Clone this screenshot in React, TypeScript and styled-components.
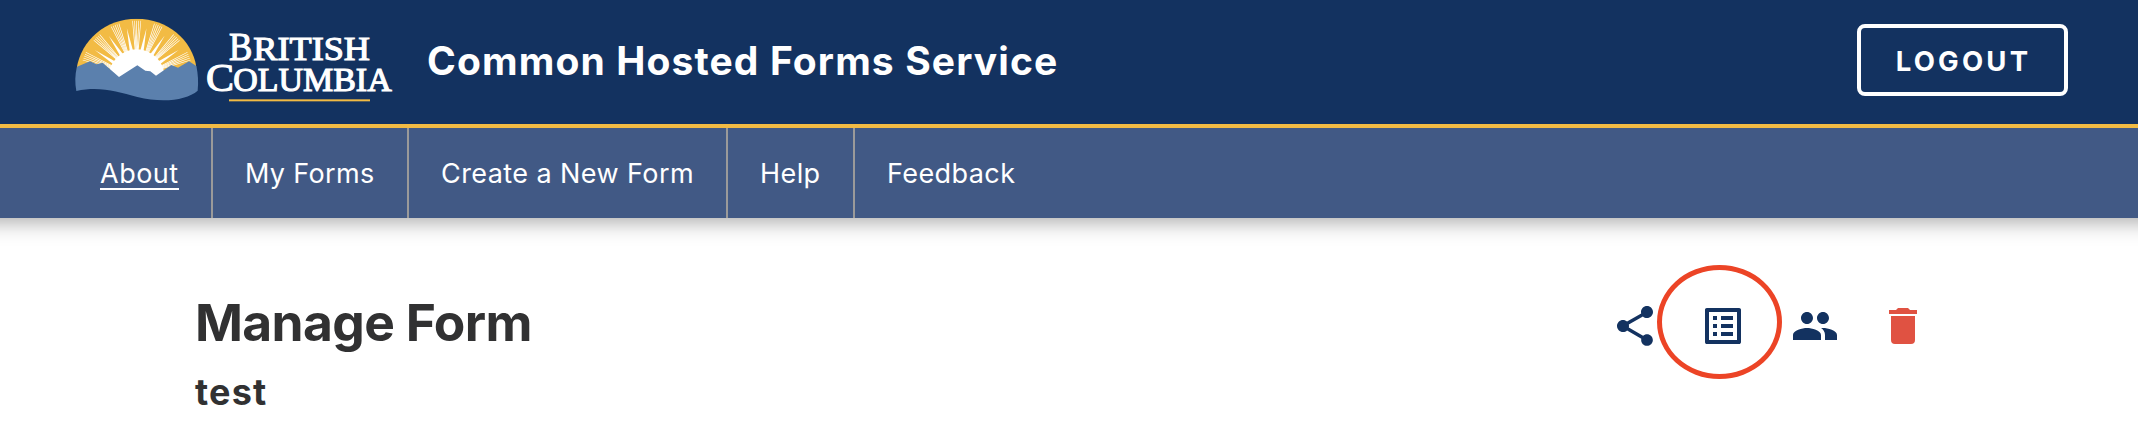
import React from "react";
import styled, { createGlobalStyle } from "styled-components";

const GlobalStyle = createGlobalStyle`
  * { box-sizing: border-box; }
  body { margin: 0; background: #fff; overflow-x: hidden; font-family: Inter, "Liberation Sans", sans-serif; }
`;

const Header = styled.header`
  position: relative;
  z-index: 1;
  height: 128px;
  padding: 0 70px 0 60px;
  display: flex;
  align-items: flex-start;
  background: #133260;
  border-bottom: 4px solid #f2bb44;
`;

const Logo = styled.svg`
  flex: none;
  width: 350px;
  height: 124px;
`;

const Title = styled.h1`
  margin: 38px auto 0 17px;
  color: #fff;
  font-size: 39px;
  line-height: 46px;
  font-weight: 650;
  letter-spacing: 1.12px;
`;

const LogoutButton = styled.button`
  margin-top: 24px;
  width: 211px;
  height: 72px;
  padding: 2px 0 0 2px;
  border: 4px solid #fff;
  border-radius: 8px;
  background: transparent;
  color: #fff;
  font: 650 27.5px/62px Inter, sans-serif;
  letter-spacing: 3.2px;
`;

const Nav = styled.nav`
  height: 90px;
  margin: 0 -24px;
  padding-left: 92px;
  display: flex;
  background: #415985;
  box-shadow: 0 4px 20px rgba(0, 0, 0, 0.34);
`;

const NavItem = styled.div<{ $width: number; $last?: boolean }>`
  width: ${(p) => p.$width}px;
  padding: 30px 0 0 32px;
  border-right: ${(p) => (p.$last ? "0" : "2px solid #9a9a9a")};
`;

const NavLink = styled.a<{ $active?: boolean; $spacing?: number }>`
  display: inline-block;
  height: 32px;
  line-height: 32px;
  font-size: 27px;
  white-space: nowrap;
  color: #fff;
  letter-spacing: ${(p) => p.$spacing ?? 0.42}px;
  border-bottom: ${(p) => (p.$active ? "2px solid #fff" : "0")};
`;

const Main = styled.main`
  display: flex;
  justify-content: space-between;
  padding: 74px 211px 0 195px;
`;

const Heading = styled.h2`
  margin: 0;
  color: #313132;
  font-size: 51.5px;
  line-height: 60px;
  font-weight: 700;
  letter-spacing: -0.65px;
`;

const FormName = styled.h3`
  margin: 19px 0 0;
  color: #313132;
  font-size: 36px;
  line-height: 42px;
  font-weight: 700;
  letter-spacing: 1.2px;
`;

const Actions = styled.div`
  display: flex;
  margin-top: 10px;
  gap: 40px;
`;

const Action = styled.div<{ $color?: string; $shift?: number }>`
  position: relative;
  width: 48px;
  height: 48px;
  margin-left: ${(p) => p.$shift ?? 0}px;
  color: ${(p) => p.$color ?? "#133260"};
  svg { display: block; fill: currentColor; }
`;

const Ring = styled.div`
  position: absolute;
  left: -42px;
  top: -37px;
  width: 125px;
  height: 114px;
  border: 5px solid #ec4426;
  border-radius: 50%;
`;

const Icon = ({ d }: { d: string }) => (
  <svg width="48" height="48" viewBox="0 0 24 24"><path d={d} /></svg>
);

const icons = {
  share: "M18 16.08c-.76 0-1.44.3-1.96.77L8.91 12.7c.05-.23.09-.46.09-.7s-.04-.47-.09-.7l7.05-4.11c.54.5 1.25.81 2.04.81 1.66 0 3-1.34 3-3s-1.34-3-3-3-3 1.34-3 3c0 .24.04.47.09.7L8.04 9.81C7.5 9.31 6.79 9 6 9c-1.66 0-3 1.34-3 3s1.34 3 3 3c.79 0 1.5-.31 2.04-.81l7.12 4.16c-.05.21-.08.43-.08.65 0 1.61 1.31 2.92 2.92 2.92 1.61 0 2.92-1.31 2.92-2.92s-1.31-2.92-2.92-2.92z",
  list: "M19 5v14H5V5h14m1.1-2H3.9c-.5 0-.9.4-.9.9v16.2c0 .4.4.9.9.9h16.2c.4 0 .9-.5.9-.9V3.9c0-.5-.5-.9-.9-.9zM11 7h6v2h-6V7zm0 4h6v2h-6v-2zm0 4h6v2h-6zM7 7h2v2H7zm0 4h2v2H7zm0 4h2v2H7z",
  group: "M16 11c1.66 0 2.99-1.34 2.99-3S17.66 5 16 5c-1.66 0-3 1.34-3 3s1.34 3 3 3zm-8 0c1.66 0 2.99-1.34 2.99-3S9.66 5 8 5C6.34 5 5 6.34 5 8s1.34 3 3 3zm0 2c-2.33 0-7 1.17-7 3.5V19h14v-2.5c0-2.33-4.67-3.5-7-3.5zm8 0c-.29 0-.62.02-.97.05 1.16.84 1.97 1.97 1.97 3.45V19h6v-2.5c0-2.33-4.67-3.5-7-3.5z",
  trash: "M19 4h-3.5l-1-1h-5l-1 1H5v2h14M6 19a2 2 0 0 0 2 2h8a2 2 0 0 0 2-2V7H6v12z",
};

// A point on the sun at an angle measured from straight up, in degrees.
const polar = (deg: number, r: number) => {
  const a = (deg * Math.PI) / 180;
  return `${(230 + r * Math.sin(a)).toFixed(1)},${(232 - r * Math.cos(a)).toFixed(1)}`;
};

const rayGroups = [-68, -45, -22.5, 0, 22.5, 45, 68];
const strands = [-4.2, -2.1, 0, 2.1, 4.2];
const spikes = [-57, -34, -11.3, 11.3, 34, 57];

const BCLogo = () => (
  <Logo viewBox="0 0 1050 372">
    <clipPath id="arch"><path d="M50 204C64 120 136 56 230 56S396 120 409 200L409 240H50z" /></clipPath>
    <g clipPath="url(#arch)">
      <rect x="40" y="50" width="380" height="200" fill="#f2bb44" />
      <circle cx="230" cy="232" r="84" fill="#fff" />
      {rayGroups.map((g) => strands.map((s) => (
        <polygon key={`${g}${s}`} fill="#fff" points={`${polar(g + s * 0.7 - 1, 78)} ${polar(g + s - 0.3, 170)} ${polar(g + s + 0.3, 170)} ${polar(g + s * 0.7 + 1, 78)}`} />
      )))}
      {spikes.map((g) => (
        <polygon key={g} fill="#fff" points={`${polar(g - 3.6, 80)} ${polar(g, 150)} ${polar(g + 3.6, 80)}`} />
      ))}
    </g>
    <path fill="#5b80ad" d="M51 200L90 184L110 193L128 188L177 231L232 196L256 212L271 214L288 227L334 195L354 203L387 184L409 198Q417 235 413 272C380 300 310 310 232 291C170 275 120 258 49 273Q42 235 51 200z" />
    <g fill="#fff" stroke="#fff" strokeWidth="3.5" fontFamily="Liberation Serif, serif">
      <text x="507" y="180" fontSize="119" textLength="70" lengthAdjust="spacingAndGlyphs">B</text>
      <text x="580" y="180" fontSize="102" textLength="350" lengthAdjust="spacingAndGlyphs">RITISH</text>
      <text x="438" y="273" fontSize="122" textLength="84" lengthAdjust="spacingAndGlyphs">C</text>
      <text x="520" y="273" fontSize="101" textLength="475" lengthAdjust="spacingAndGlyphs">OLUMBIA</text>
    </g>
    <rect x="507" y="298" width="423" height="6" fill="#f2bb44" />
  </Logo>
);

export default function App() {
  return (
    <>
      <GlobalStyle />
      <Header>
        <BCLogo />
        <Title>Common Hosted Forms Service</Title>
        <LogoutButton>LOGOUT</LogoutButton>
      </Header>
      <Nav>
        <NavItem $width={145}><NavLink $active $spacing={0.5}>About</NavLink></NavItem>
        <NavItem $width={196}><NavLink $spacing={0.35}>My Forms</NavLink></NavItem>
        <NavItem $width={319}><NavLink>Create a New Form</NavLink></NavItem>
        <NavItem $width={127}><NavLink>Help</NavLink></NavItem>
        <NavItem $width={192} $last><NavLink>Feedback</NavLink></NavItem>
      </Nav>
      <Main>
        <div>
          <Heading>Manage Form</Heading>
          <FormName>test</FormName>
        </div>
        <Actions>
          <Action><Icon d={icons.share} /></Action>
          <Action><Icon d={icons.list} /><Ring /></Action>
          <Action $shift={4}><Icon d={icons.group} /></Action>
          <Action $color="#e05242"><Icon d={icons.trash} /></Action>
        </Actions>
      </Main>
    </>
  );
}
